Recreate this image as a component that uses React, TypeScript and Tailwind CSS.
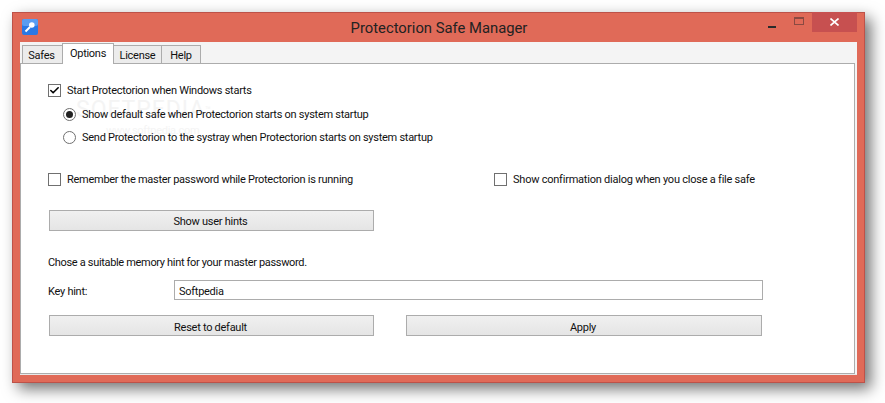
import type { ReactNode } from "react";
import { Check } from "lucide-react";

const font = "font-['Roboto',sans-serif]";

function Tab({ label, active, className }: { label: string; active?: boolean; className: string }) {
  if (active) {
    return (
      <div
        className={
          "relative z-10 flex h-[21px] items-start justify-center border border-b-0 border-[#acacac] bg-white pt-[2px] " +
          className
        }
      >
        {label}
      </div>
    );
  }
  return (
    <div className={"flex h-[19px] items-center justify-center border border-[#acacac] bg-[#ececec] pt-[3px] " + className}>
      {label}
    </div>
  );
}

function Box({ checked }: { checked?: boolean }) {
  return (
    <span className="flex h-[13px] w-[13px] shrink-0 items-center justify-center border border-[#707070] bg-white">
      {checked && <Check className="h-[11px] w-[11px] text-black" strokeWidth={3.5} />}
    </span>
  );
}

function Radio({ checked }: { checked?: boolean }) {
  return (
    <span className="flex h-[13px] w-[13px] shrink-0 items-center justify-center rounded-full border border-[#707070] bg-white">
      {checked && <span className="h-[7px] w-[7px] rounded-full bg-[#222]" />}
    </span>
  );
}

function Btn({ label, className }: { label: string; className: string }) {
  return (
    <div
      className={
        "flex h-[21px] items-center justify-center border border-[#acacac] bg-gradient-to-b from-[#f0f0f0] to-[#e5e5e5] pr-[2px] " +
        className
      }
    >
      {label}
    </div>
  );
}

function Txt({ children }: { children: ReactNode }) {
  return <span className="pt-[2px]">{children}</span>;
}

export default function App() {
  return (
    <div className={"h-[403px] w-[885px] bg-white pl-[12px] pt-[12px] text-[11px] leading-[16px] tracking-[-0.27px] text-[#111] " + font}>
      <div className="flex h-[371px] w-[853px] flex-col border border-[#bd5249] bg-[#e06a58] pl-[7px] pr-[7px] pb-[7px] shadow-[6px_6px_14px_rgba(0,0,0,0.55)]">
        {/* title bar */}
        <div className="relative flex h-[29px] shrink-0 items-center">
          <svg viewBox="0 0 16 16" className="ml-[2px] -mt-px h-[16px] w-[16px]">
            <rect width="16" height="16" rx="2" fill="#2b78e4" />
            <rect width="16" height="7" rx="2" fill="#5a9cf0" />
            <path d="M3.5 12.5 8 8" stroke="#fff" strokeWidth="2" />
            <circle cx="9.8" cy="6" r="2.8" fill="#fff" />
          </svg>
          <div className="absolute left-0 right-0 top-[5px] pl-px text-center text-[14.8px] leading-[20px] tracking-normal text-[#222]">
            Protectorion Safe Manager
          </div>
          <div className="ml-auto flex items-start">
            <div className="mt-[3px] h-[2px] w-[8px] bg-[#2b2b2b]" />
            <div className="ml-[18px] -mt-[6px] h-[8px] w-[10px] border border-[#8a4a42] border-t-2" />
            <div className="ml-[8px] -mt-[11px] flex h-[20px] w-[45px] items-center justify-center bg-[#c75050] text-white">
              <svg viewBox="0 0 9 8" className="h-[8px] w-[9px]">
                <path d="M0.5 0.5 8.5 7.5M8.5 0.5 0.5 7.5" stroke="#fff" strokeWidth="1.6" />
              </svg>
            </div>
          </div>
        </div>

        {/* client area */}
        <div className="flex min-h-0 flex-1 flex-col border-b border-[#e8e8e8] bg-[#f4f4f4]">
          <div className="flex h-[22px] shrink-0 items-end pl-[2px]">
            <Tab label="Safes" className="w-[41px] pr-[2px]" />
            <Tab label="Options" active className="-ml-px w-[52px]" />
            <Tab label="License" className="-ml-px w-[49px]" />
            <Tab label="Help" className="-ml-px w-[40px]" />
          </div>
          <div className="relative -mt-px mr-[2px] min-h-0 flex-1 border border-[#acacac] bg-white pl-[27px] pt-[18px]">
            {/* watermark */}
            <div className="pointer-events-none absolute left-[55px] top-[33px] text-[23px] leading-[26px] tracking-[1px] text-[#f4f4f4]">
              SOFTPEDIA<sup className="text-[9px]">™</sup>
            </div>
            <div className="pointer-events-none absolute left-[85px] top-[60px] text-[11px] leading-[14px] text-[#f4f4f4]">
              www.softpedia.com
            </div>

            <div className="relative">
              <label className="flex h-[16px] items-center gap-[6px]">
                <Box checked />
                <Txt>Start Protectorion when Windows starts</Txt>
              </label>
              <div className="mt-[8px] flex h-[16px] items-center gap-[6px] pl-[15px]">
                <Radio checked />
                <Txt>Show default safe when Protectorion starts on system startup</Txt>
              </div>
              <div className="mt-[7px] flex h-[16px] items-center gap-[6px] pl-[15px]">
                <Radio />
                <Txt>Send Protectorion to the systray when Protectorion starts on system startup</Txt>
              </div>
              <div className="mt-[26px] flex h-[16px]">
                <div className="flex w-[446px] items-center gap-[6px]">
                  <Box />
                  <Txt>Remember the master password while Protectorion is running</Txt>
                </div>
                <div className="flex items-center gap-[6px]">
                  <Box />
                  <span className="pt-[2px] tracking-[-0.23px]">Show confirmation dialog when you close a file safe</span>
                </div>
              </div>
              <Btn label="Show user hints" className="ml-[1px] mt-[23px] w-[325px] pt-[2px]" />
              <div className="mt-[23px] h-[16px] pt-[1px] tracking-[-0.33px]">Chose a suitable memory hint for your master password.</div>
              <div className="mt-[10px] flex h-[20px] items-center">
                <div className="w-[126px] pt-[4px]">Key hint:</div>
                <div className="flex h-[20px] w-[589px] items-center border border-[#acacac] bg-white pl-[4px] pt-[3px]">Softpedia</div>
              </div>
              <div className="ml-[1px] mt-[15px] flex gap-[32px]">
                <Btn label="Reset to default" className="w-[325px] pt-[4px]" />
                <Btn label="Apply" className="w-[356px] pt-[4px]" />
              </div>
            </div>
          </div>
        </div>
      </div>
    </div>
  );
}
